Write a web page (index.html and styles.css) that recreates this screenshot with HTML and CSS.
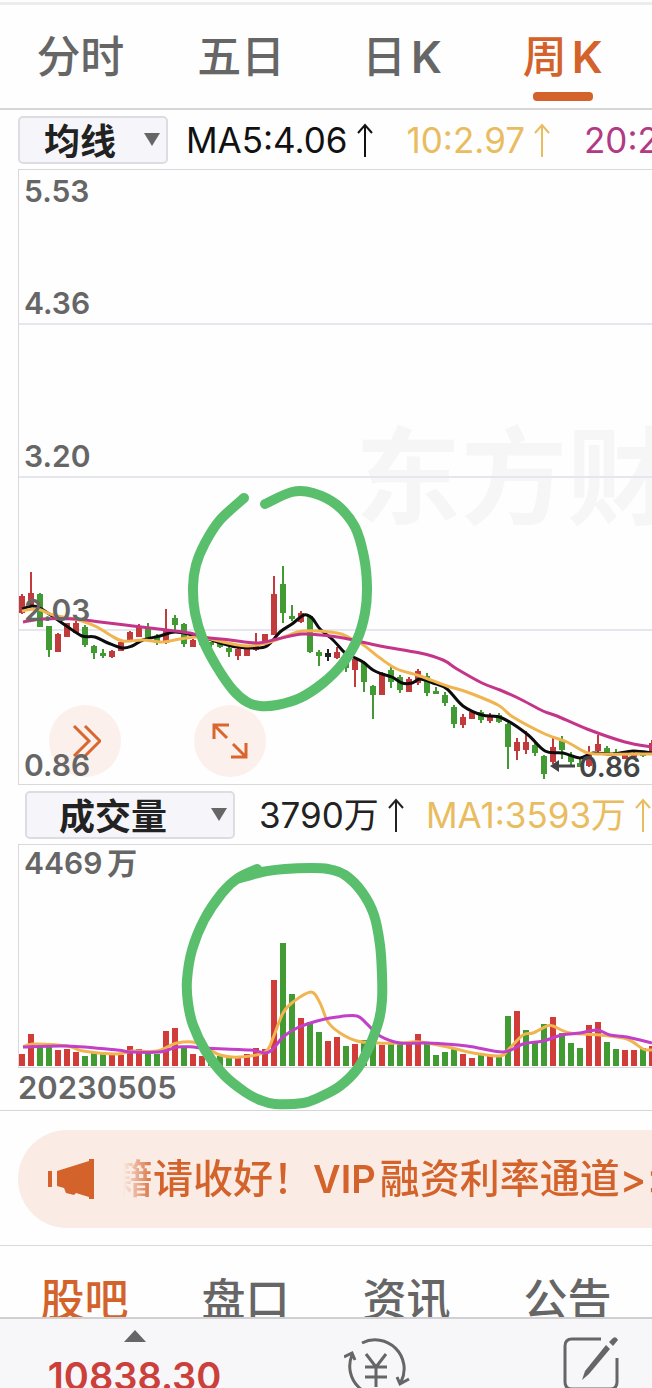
FILE: index.html
```html
<!DOCTYPE html>
<html lang="zh-CN">
    <head>
        <meta charset="utf-8">
        <meta name="viewport" content="width=device-width, initial-scale=1">
        <title>周K</title>
        <link rel="stylesheet" href="styles.css">
        <script src="chart.js" defer></script>
    </head>
    <body>
        <nav class="tabs period-tabs">
            <button class="tab">分时</button>
            <button class="tab">五日</button>
            <button class="tab">日<span class="latin">K</span></button>
            <button class="tab active">周<span class="latin">K</span></button>
        </nav>

        <main class="charts">
            <div class="toolbar">
                <div class="picker">
                    <select aria-label="主图指标">
                        <option>均线</option>
                        <option>BOLL</option>
                    </select>
                    <span class="caret"></span>
                </div>
                <div class="readings">
                    <span class="reading ma5">MA5:4.06
                        <svg class="up" viewBox="0 0 16 34"><path d="M8 34V2M1 10L8 2L15 10"/></svg>
                    </span>
                    <span class="reading ma10">10:2.97
                        <svg class="up" viewBox="0 0 16 34"><path d="M8 34V2M1 10L8 2L15 10"/></svg>
                    </span>
                    <span class="reading ma20">20:2.35</span>
                </div>
            </div>

            <div class="plot price-plot">
                <button class="round-btn btn-forward" aria-label="展开">
                    <svg width="32" height="36" viewBox="0 0 32 36"><path d="M5 3L20 18L5 33M16 3L31 18L16 33"/></svg>
                </button>
                <button class="round-btn btn-expand" aria-label="全屏">
                    <svg width="36" height="36" viewBox="0 0 36 36"><path d="M2 16V2H17M2 2L15 15M34 20V34H19M34 34L21 21"/></svg>
                </button>
                <svg class="canvas">
                    <text class="watermark" x="336" y="346">东方财富</text>
                    <path class="grid" d="M0 154H2000M0 307H2000M0 460H2000"/>
                    <g id="candles"></g>
                    <g id="priceLines"></g>
                    <g class="axis">
                        <text x="5" y="32">5.53</text>
                        <text x="5" y="144">4.36</text>
                        <text x="5" y="297">3.20</text>
                        <text x="5" y="451">2.03</text>
                        <text x="5" y="606">0.86</text>
                    </g>
                    <path class="low-arrow" d="M556 596H538"/>
                    <path class="low-head" d="M531 596L540 590V602Z"/>
                    <text class="low-text" x="560" y="607">0.86</text>
                </svg>
            </div>

            <div class="toolbar volume-toolbar">
                <div class="picker wide">
                    <select aria-label="副图指标">
                        <option>成交量</option>
                        <option>MACD</option>
                    </select>
                    <span class="caret"></span>
                </div>
                <div class="readings">
                    <span class="reading vol">3790万
                        <svg class="up" viewBox="0 0 16 34"><path d="M8 34V2M1 10L8 2L15 10"/></svg>
                    </span>
                    <span class="reading ma10">MA1:3593万
                        <svg class="up" viewBox="0 0 16 34"><path d="M8 34V2M1 10L8 2L15 10"/></svg>
                    </span>
                </div>
            </div>

            <div class="plot volume-plot">
                <svg class="canvas">
                    <g id="volumes"></g>
                    <g id="volumeLines"></g>
                    <g class="axis">
                        <text x="5" y="29">4469<tspan dx="5">万</tspan></text>
                    </g>
                </svg>
            </div>
            <div class="date">20230505</div>

            <svg class="marks" id="marks"></svg>
        </main>

        <section class="notice-wrap">
            <a class="notice" href="#">
                <svg class="horn" width="46" height="40" viewBox="0 0 46 40">
                    <path d="M0 12H4V28H0ZM9 12L41 2V0H46V40H41V38L28 34L26 36L18 34L16 29L9 27Z"/>
                </svg>
                <span class="notice-text"><span class="notice-run">籍请收好！<span class="vip">VIP</span>融资利率通道&gt;&gt;</span></span>
            </a>
        </section>

        <nav class="tabs info-tabs">
            <button class="tab active">股吧</button>
            <button class="tab">盘口</button>
            <button class="tab">资讯</button>
            <button class="tab">公告</button>
        </nav>

        <footer class="bottom-bar">
            <button class="index">
                <span class="index-caret"></span>
                10838.30
            </button>
            <button class="action" aria-label="交易">
                <svg width="66" height="60" viewBox="0 0 66 60">
                    <path d="M18 7A29 29 0 0 1 57 46M53 41L56 48L65 43M48 56A29 29 0 0 1 8 19M0 21L8 17L11 24"/>
                    <path d="M22 18L32 31L42 18M32 31V51M21 31H43M21 41H43"/>
                </svg>
            </button>
            <button class="action" aria-label="发帖">
                <svg width="56" height="60" viewBox="0 0 56 60">
                    <path d="M38 3H9Q2 3 2 10V46Q2 53 9 53H47Q54 53 54 46V22"/>
                    <path class="pen" d="M43 9L47 13L26 38L19 44L22 35Z"/>
                    <path class="pen" d="M46 6L50 2Q53 0 55 4L50 10Z"/>
                </svg>
            </button>
        </footer>
    </body>
</html>
```

FILE: styles.css
```css
body {
    margin: 0;
    min-height: 100vh;
    overflow: hidden;
    background-color: #fefefe;
    font-family: Inter, "Noto Sans CJK SC", sans-serif;
    color: #666;
}
button {
    padding: 0;
    border: 0;
    background: none;
    font: inherit;
    color: inherit;
}
svg {
    fill: none;
}

/* tabs */
.tabs {
    display: grid;
    grid-template-columns: repeat(4, 1fr);
    padding-right: 9px;
}
.tab {
    position: relative;
    height: 100%;
    font-size: 44px;
    font-weight: 500;
    line-height: 64px;
    white-space: nowrap;
}
.tab.active {
    color: #d4622b;
}
.latin {
    margin-left: 5px;
    font-weight: 600;
}
.period-tabs {
    box-sizing: border-box;
    height: 108px;
    margin-top: 2px;
    border-top: 3px solid #ececec;
    border-bottom: 2px solid #d6d6d6;
}
.period-tabs .active::after {
    content: "";
    position: absolute;
    left: calc(50% - 30px);
    bottom: 7px;
    width: 60px;
    height: 9px;
    border-radius: 4px;
    background-color: #d4622b;
}

/* indicator rows */
.charts {
    position: relative;
    border-bottom: 1px solid #d6d6d6;
}
.toolbar {
    display: flex;
    align-items: center;
    gap: 18px;
    height: 59px;
    padding-left: 18px;
    overflow: hidden;
}
.volume-toolbar {
    gap: 24px;
    padding-left: 25px;
}
.picker {
    display: grid;
    flex: none;
    align-items: center;
    width: 150px;
    height: 48px;
}
.picker.wide {
    width: 210px;
}
.picker select,
.caret {
    grid-area: 1 / 1;
}
.picker select {
    appearance: none;
    box-sizing: border-box;
    width: 100%;
    height: 48px;
    padding: 2px 0 0 24px;
    border: 2px solid #dcdce2;
    border-radius: 5px;
    background-color: #f6f6fa;
    font: 700 36px Inter, "Noto Sans CJK SC", sans-serif;
    color: #222;
}
.picker.wide select {
    padding-left: 32px;
}
.caret {
    justify-self: end;
    margin-right: 8px;
    border: 8px solid transparent;
    border-top: 13px solid #666;
    border-bottom: 0;
    pointer-events: none;
}
.readings {
    display: flex;
    gap: 34px;
    font-size: 35px;
    line-height: 48px;
    white-space: nowrap;
}
.volume-toolbar .readings {
    gap: 22px;
}
.reading {
    display: flex;
    align-items: center;
    gap: 9px;
}
.up {
    width: 16px;
    height: 34px;
    stroke: currentColor;
    stroke-width: 2;
}
.ma5 { color: #111; }
.ma10 { color: #e9bc60; }
.ma20 { color: #b13a85; }
.vol { color: #222; }

/* plots */
.plot {
    position: relative;
    box-sizing: border-box;
    margin-left: 18px;
    border: 1px solid #d9d9dc;
    border-right: 0;
}
.price-plot {
    height: 616px;
}
.volume-plot {
    height: 224px;
}
.canvas {
    position: relative;
    display: block;
    width: 100%;
    height: 100%;
    pointer-events: none;
}
.grid {
    stroke: #e6e6ee;
    stroke-width: 2;
}
.watermark {
    font-size: 106px;
    font-weight: 700;
    fill: #f6f6f6;
}
.axis {
    font-size: 30px;
    font-weight: 600;
    fill: #666;
}
.up-bar { fill: #c23b3c; }
.down-bar { fill: #429a33; }
.flat-bar { fill: #222; }
.volume-plot .up-bar { fill: #d23c38; }
.line {
    stroke-width: 3;
    stroke-linejoin: round;
}
.line-black { stroke: #0c0c0c; }
.line-yellow { stroke: #f0b551; }
.line-pink { stroke: #c43488; }
.line-purple { stroke: #c23fc8; }
.low-arrow {
    stroke: #444;
    stroke-width: 3;
}
.low-head {
    fill: #444;
}
.low-text {
    font-size: 28px;
    font-weight: 600;
    fill: #444;
}
.round-btn {
    position: absolute;
    bottom: 7px;
    display: flex;
    align-items: center;
    justify-content: center;
    width: 72px;
    height: 72px;
    border-radius: 50%;
    background-color: #fbf0eb;
}
.round-btn svg {
    stroke: #d9662f;
    stroke-width: 3;
}
.btn-forward { left: 30px; }
.btn-expand { left: 175px; }
.date {
    height: 42px;
    padding-left: 18px;
    font-size: 31px;
    font-weight: 600;
    line-height: 40px;
}

/* hand-drawn circles over both plots */
.marks {
    position: absolute;
    top: 0;
    left: 0;
    width: 100%;
    height: 100%;
    overflow: visible;
    pointer-events: none;
}
.marks path {
    stroke: #5abf6c;
    stroke-width: 10;
    stroke-linecap: round;
    stroke-linejoin: round;
}

/* notice */
.notice-wrap {
    padding: 19px 0 17px 18px;
    border-bottom: 1px solid #d9d9d9;
}
.notice {
    display: flex;
    align-items: center;
    gap: 29px;
    height: 98px;
    padding-left: 30px;
    border-radius: 49px 0 0 49px;
    background-color: #faece5;
    color: #d4622b;
    text-decoration: none;
    overflow: hidden;
}
.horn {
    flex: none;
    fill: #d4622b;
}
.notice-text {
    display: flex;
    flex: 1;
    overflow: hidden;
    font-size: 40px;
    font-weight: 500;
    line-height: 60px;
    white-space: nowrap;
    -webkit-mask-image: linear-gradient(to right, transparent, #000 32px);
    mask-image: linear-gradient(to right, transparent, #000 32px);
}
.notice-run {
    margin-left: -10px;
}
.vip {
    margin-right: 4px;
    font-size: 38px;
    font-weight: 600;
}

.info-tabs {
    height: 108px;
    padding: 0 4px;
}

/* bottom bar */
.bottom-bar {
    position: fixed;
    right: 0;
    bottom: 0;
    left: 0;
    display: grid;
    grid-template-columns: 10fr 8fr 5fr;
    align-items: start;
    justify-items: center;
    box-sizing: border-box;
    height: 71px;
    padding-right: 33px;
    border-top: 2px solid #d0d0d3;
    background-color: #f7f7f9;
    overflow: hidden;
}
.index {
    display: flex;
    flex-direction: column;
    align-items: center;
    gap: 12px;
    padding-top: 11px;
    font-size: 38px;
    font-weight: 600;
    line-height: 44px;
    color: #cb403b;
}
.index-caret {
    border: 11px solid transparent;
    border-top: 0;
    border-bottom: 12px solid #666;
}
.action {
    padding-top: 17px;
}
.action:last-child {
    justify-self: end;
}
.action svg {
    display: block;
    stroke: #666;
    stroke-width: 3;
}
.action .pen {
    fill: #666;
    stroke: none;
}
```

FILE: chart.js
```js
const step = 9;
const barWidth = 6;
const volumeBase = 221;
const classes = { r: "up-bar", g: "down-bar", k: "flat-bar" };

// colour, high, body top, body bottom, low
const candles = [
    ["r", 424, 426, 443, 444], ["r", 402, 423, 437, 437], ["g", 423, 424, 457, 457],
    ["g", 456, 456, 480, 487], ["r", 463, 464, 482, 482], ["r", 453, 453, 467, 467],
    ["r", 450, 453, 463, 463], ["g", 455, 457, 475, 477], ["g", 475, 476, 483, 489],
    ["g", 479, 483, 486, 488], ["r", 480, 481, 487, 488], ["r", 471, 472, 481, 481],
    ["r", 461, 462, 470, 470], ["r", 454, 456, 467, 467], ["g", 453, 459, 469, 470],
    ["g", 464, 467, 473, 475], ["r", 439, 460, 473, 474], ["g", 445, 448, 455, 461],
    ["g", 453, 454, 474, 477], ["r", 469, 470, 477, 477], ["g", 470, 471, 475, 476],
    ["g", 472, 472, 475, 477], ["g", 472, 473, 477, 478], ["g", 477, 478, 482, 487],
    ["r", 478, 479, 486, 490], ["r", 478, 479, 486, 486], ["r", 463, 472, 480, 481],
    ["r", 464, 464, 475, 475], ["r", 406, 424, 465, 465], ["g", 396, 414, 443, 453],
    ["g", 435, 446, 449, 451], ["r", 441, 443, 452, 453], ["g", 445, 446, 482, 483],
    ["g", 480, 482, 486, 496], ["k", 479, 483, 487, 491], ["r", 477, 482, 488, 489],
    ["g", 483, 490, 498, 502], ["r", 488, 489, 500, 517], ["g", 491, 493, 512, 522],
    ["g", 515, 516, 525, 549], ["r", 502, 503, 525, 525], ["g", 497, 500, 512, 518],
    ["g", 505, 507, 520, 523], ["r", 507, 509, 522, 522], ["r", 499, 501, 513, 515],
    ["g", 503, 506, 523, 526], ["g", 517, 521, 524, 524], ["g", 522, 525, 533, 536],
    ["g", 535, 537, 554, 558], ["r", 544, 547, 555, 558], ["r", 541, 542, 549, 549],
    ["g", 540, 542, 550, 553], ["r", 543, 545, 551, 553], ["g", 543, 545, 552, 553],
    ["g", 553, 554, 577, 599], ["r", 568, 572, 581, 590], ["r", 561, 572, 580, 584],
    ["g", 572, 575, 583, 586], ["g", 585, 586, 604, 609], ["r", 568, 577, 592, 594],
    ["g", 566, 571, 580, 589], ["g", 582, 585, 592, 596], ["g", 587, 593, 597, 597],
    ["r", 576, 585, 596, 597], ["r", 565, 574, 581, 585], ["g", 576, 578, 583, 583],
    ["g", 579, 582, 584, 584], ["r", 582, 583, 589, 589], ["r", 582, 584, 587, 587],
    ["g", 581, 583, 586, 587], ["r", 570, 573, 585, 585]
];

const volumes = [
    "r12", "r32", "g19", "g19", "r16", "r17", "r14", "g10", "g13", "g12", "r11", "r11",
    "r20", "r17", "g13", "g12", "r35", "r38", "g18", "r12", "r10", "g11", "g10", "g9",
    "r8", "r12", "r18", "r17", "r86", "g123", "g72", "r48", "g44", "g34", "r25", "r29",
    "g20", "r22", "g26", "g24", "r21", "g24", "g22", "r22", "r32", "g23", "g11", "g14",
    "g18", "r12", "r8", "g11", "r10", "g10", "g50", "r55", "g36", "g23", "g42", "r49",
    "g33", "g23", "g18", "r41", "r44", "g24", "g17", "r16", "r16", "g18", "r20"
];

const priceLines = {
    black: "3,439 13,436 21,438 36,448 49,457 63,466 76,467 89,473 103,478 113,476 124,470 141,466 156,462 174,465 184,467 201,473 218,477 234,478 248,476 261,462 273,454 285,445 293,448 301,459 314,470 326,483 334,487 344,492 354,500 363,504 373,507 383,513 393,513 401,509 414,513 428,519 444,536 463,545 483,548 508,564 526,581 544,583 561,588 574,583 594,584 614,581 633,583",
    yellow: "3,441 18,439 34,445 49,448 63,451 78,457 91,465 104,471 124,470 144,472 161,469 181,467 204,472 228,476 248,473 268,466 284,461 318,463 331,468 343,474 361,488 378,499 401,506 428,516 448,522 479,535 494,547 526,564 548,572 566,582 581,584 633,584",
    pink: "4,452 24,449 56,449 81,452 114,456 148,460 171,463 184,467 211,470 239,473 258,469 284,464 311,466 334,470 361,476 401,483 424,490 438,499 463,513 481,520 501,529 524,541 538,546 568,559 606,572 633,577"
};

const volumeLines = {
    yellow: "4,202 14,199 48,201 64,206 98,209 114,206 138,206 158,198 178,198 201,210 221,212 246,207 254,193 264,168 274,157 292,147 301,158 309,177 321,188 338,196 358,198 381,198 401,197 433,203 454,208 481,211 489,205 504,190 514,188 528,181 534,181 551,188 581,190 608,194 624,204 633,205",
    purple: "4,202 48,201 98,205 111,207 141,207 158,202 174,202 184,203 231,205 246,208 254,204 264,192 278,183 298,176 318,172 338,171 348,179 361,191 381,198 408,198 448,201 484,207 504,199 524,196 543,190 561,188 578,185 591,190 608,192 633,198"
};

const marks = [
    "244,388 220,410 205,433 196,455 193,477 195,503 203,530 217,557 233,580 247,592 260,596 277,595 300,588 323,573 343,553 357,530 365,503 367,477 364,447 355,417 337,395 313,383 292,382 265,394",
    "257,759 238,768 222,783 204,810 192,840 187,870 188,893 193,915 205,940 224,965 245,982 260,990 275,994 303,993 320,987 340,976 358,958 370,935 379,910 382,890 382,865 380,835 374,805 362,782 345,765 328,759 310,758 285,759 262,762 237,769"
];

function add(parent, name, attrs) {
    const elm = document.createElementNS("http://www.w3.org/2000/svg", name);
    Object.keys(attrs).forEach(key => elm.setAttribute(key, attrs[key]));
    parent.appendChild(elm);
}

// smooth path through every point
function curve(text) {
    const p = text.split(" ").map(pair => pair.split(",").map(Number));
    let d = `M${p[0]}`;
    for (let i = 0; i < p.length - 1; i++) {
        const a = p[i - 1] || p[i];
        const b = p[i];
        const c = p[i + 1];
        const e = p[i + 2] || c;
        d += `C${b[0] + (c[0] - a[0]) / 6},${b[1] + (c[1] - a[1]) / 6} ${c[0] - (e[0] - b[0]) / 6},${c[1] - (e[1] - b[1]) / 6} ${c}`;
    }
    return d;
}

function drawLines(id, lines) {
    const parent = document.querySelector(id);
    Object.keys(lines).forEach(name => add(parent, "path", { class: `line line-${name}`, d: curve(lines[name]) }));
}

const candlesElm = document.querySelector("#candles");
candles.forEach(([color, high, top, bottom, low], i) => {
    add(candlesElm, "rect", { class: classes[color], x: i * step + 2, y: high, width: 2, height: low - high });
    add(candlesElm, "rect", { class: classes[color], x: i * step, y: top, width: barWidth, height: bottom - top });
});

const volumesElm = document.querySelector("#volumes");
volumes.forEach((item, i) => {
    const height = Number(item.slice(1));
    add(volumesElm, "rect", { class: classes[item[0]], x: i * step, y: volumeBase - height, width: barWidth, height: height });
});

drawLines("#priceLines", priceLines);
drawLines("#volumeLines", volumeLines);
marks.forEach(points => add(document.querySelector("#marks"), "path", { d: curve(points) }));
```
